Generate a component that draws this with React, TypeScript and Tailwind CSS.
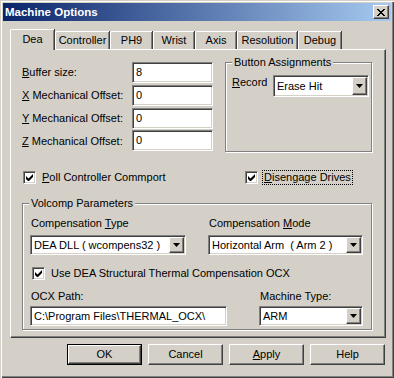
import type { ReactNode } from "react";

const sunken =
  "border border-t-[#808080] border-l-[#808080] border-b-white border-r-white shadow-[inset_1px_1px_0_#404040,inset_-1px_-1px_0_#d4d0c8]";
const raised =
  "border border-t-white border-l-white border-b-[#404040] border-r-[#404040] shadow-[inset_-1px_-1px_0_#808080]";

function Field({ w, h = 21, children }: { w: number; h?: number; children: ReactNode }) {
  return (
    <div
      className={`${sunken} flex items-center bg-white pl-[3px] leading-none`}
      style={{ width: w, height: h }}
    >
      {children}
    </div>
  );
}

function Arrow() {
  return (
    <div className={`${raised} flex h-full w-[15px] items-center justify-center bg-[#d4d0c8]`}>
      <svg width="7" height="4" viewBox="0 0 7 4">
        <path d="M0 0h7L3.5 4z" fill="#000" />
      </svg>
    </div>
  );
}

function Combo({ w, h = 21, value }: { w: number; h?: number; value: string }) {
  return (
    <div
      className={`${sunken} flex items-stretch bg-white p-[1px] leading-none`}
      style={{ width: w, height: h }}
    >
      <span className="flex flex-1 items-center pl-[2px] whitespace-pre">{value}</span>
      <Arrow />
    </div>
  );
}

function Check({ children, focus }: { children: ReactNode; focus?: boolean }) {
  return (
    <div className="flex h-[13px] items-center">
      <div className={`${sunken} flex h-[13px] w-[13px] items-center justify-center bg-white`}>
        <svg width="7" height="7" viewBox="0 0 7 7">
          <path d="M0 2v3l2 2h1l4-4V0L2.5 4.5z" fill="#000" />
        </svg>
      </div>
      <span
        className={`ml-[4px] leading-[13px] px-[1px] border ${focus ? "border-dotted border-black" : "border-transparent"}`}
      >
        {children}
      </span>
    </div>
  );
}

function Group({ label, className, children }: { label: string; className: string; children: ReactNode }) {
  return (
    <div className={`relative border border-[#808080] shadow-[inset_1px_1px_0_#fff,1px_1px_0_#fff] ${className}`}>
      {/* legend sitting on the etched line */}
      <span className="absolute top-[-7px] left-[6px] bg-[#d4d0c8] px-[2px] leading-[13px]">{label}</span>
      {children}
    </div>
  );
}

function Btn({ children, def }: { children: ReactNode; def?: boolean }) {
  return (
    <div className={`h-[21px] w-[75px] ${def ? "border border-black" : ""}`}>
      <div className={`${raised} flex h-full w-full items-center justify-center bg-[#d4d0c8]`}>{children}</div>
    </div>
  );
}

const tabs = [
  { name: "Controller", w: 55 },
  { name: "PH9", w: 43 },
  { name: "Wrist", w: 42 },
  { name: "Axis", w: 42 },
  { name: "Resolution", w: 61 },
  { name: "Debug", w: 44 },
];

export default function App() {
  return (
    <div className="h-[378px] w-[394px] bg-[#d4d0c8] p-[3px] font-['Liberation_Sans',Arial,sans-serif] text-[11px] leading-[13px] text-black shadow-[inset_1px_1px_0_#d4d0c8,inset_2px_2px_0_#fff,inset_-1px_-1px_0_#404040,inset_-2px_-2px_0_#808080]">
      {/* Title bar */}
      <div className="flex h-[18px] items-start justify-between bg-[linear-gradient(90deg,#0a246a,#a6caf0)] pl-[2px] pr-[2px]">
        <span className="mt-[2px] text-[11.5px] leading-[14px] font-bold text-white">Machine Options</span>
        <div className={`${raised} mt-[2px] flex h-[14px] w-[16px] items-center justify-center bg-[#d4d0c8]`}>
          <svg width="8" height="7" viewBox="0 0 8 7">
            <path d="M0 0l7 7M1 0l7 7M7 0L0 7M8 0L1 7" stroke="#000" strokeWidth="1" />
          </svg>
        </div>
      </div>

      {/* Tabs */}
      <div className="mt-[8px] flex h-[20px] items-end pl-[7px]">
        <div className="relative z-10 mb-[-1px] flex h-[21px] w-[44px] items-center justify-center rounded-tl-[2px] border-t border-l border-white bg-[#d4d0c8] pb-[1px] shadow-[inset_-1px_0_0_#808080,1px_0_0_#404040]">
          Dea
        </div>
        {tabs.map((t) => (
          <div
            key={t.name}
            className="ml-[1px] flex h-[18px] items-center justify-center rounded-tl-[2px] border-t border-l border-white bg-[#d4d0c8] shadow-[inset_-1px_0_0_#808080,1px_0_0_#404040]"
            style={{ width: t.w - 1 }}
          >
            {t.name}
          </div>
        ))}
      </div>

      {/* Tab panel */}
      <div className="ml-[7px] h-[289px] w-[376px] border-t border-l border-t-white border-l-white border-r border-b border-r-[#404040] border-b-[#404040] pl-[11px] shadow-[inset_-1px_-1px_0_#808080]">
        <div className="mt-[12px] flex">
          <div className="grid grid-cols-[110px_81px] gap-y-[1px]">
            <span className="self-center"><u>B</u>uffer size:</span>
            <Field w={81}>8</Field>
            <span className="self-center"><u>X</u> Mechanical Offset:</span>
            <Field w={81}>0</Field>
            <span className="self-center"><u>Y</u> Mechanical Offset:</span>
            <Field w={81}>0</Field>
            <span className="self-center"><u>Z</u> Mechanical Offset:</span>
            <Field w={81}>0</Field>
          </div>
          <Group label="Button Assignments" className="ml-[12px] h-[90px] w-[147px]">
            <div className="mt-[12px] flex items-start pl-[6px]">
              <span className="mt-[1px] w-[41px]"><u>R</u>ecord</span>
              <Combo w={96} h={22} value="Erase Hit" />
            </div>
          </Group>
        </div>

        <div className="mt-[19px] flex pl-[1px]">
          <div className="w-[222px]">
            <Check><u>P</u>oll Controller Commport</Check>
          </div>
          <Check focus><u>D</u>isengage Drives</Check>
        </div>

        <Group label="Volcomp Parameters" className="mt-[19px] h-[127px] w-[350px]">
          <div className="mt-[13px] flex pl-[8px]">
            <span className="w-[178px]">Compensation <u>T</u>ype</span>
            <span>Compensation <u>M</u>ode</span>
          </div>
          <div className="mt-[5px] flex pl-[7px]">
            <Combo w={156} h={20} value="DEA DLL ( wcompens32 )" />
            <div className="ml-[22px]">
              <Combo w={155} h={20} value="Horizontal Arm  ( Arm 2 )" />
            </div>
          </div>
          <div className="mt-[12px] pl-[9px]">
            <Check>Use DEA Structural Thermal Compensation OCX</Check>
          </div>
          <div className="mt-[10px] flex pl-[8px]">
            <span className="w-[229px]">OCX Path:</span>
            <span>Machine Type:</span>
          </div>
          <div className="mt-[3px] flex pl-[7px]">
            <Field w={197} h={20}>C:\Program Files\THERMAL_OCX\</Field>
            <div className="ml-[32px]">
              <Combo w={104} h={20} value="ARM" />
            </div>
          </div>
        </Group>
      </div>

      {/* Dialog buttons */}
      <div className="mt-[6px] flex gap-[6px] pl-[64px]">
        <Btn def>OK</Btn>
        <Btn>Cancel</Btn>
        <Btn><u>A</u>pply</Btn>
        <Btn>Help</Btn>
      </div>
    </div>
  );
}
